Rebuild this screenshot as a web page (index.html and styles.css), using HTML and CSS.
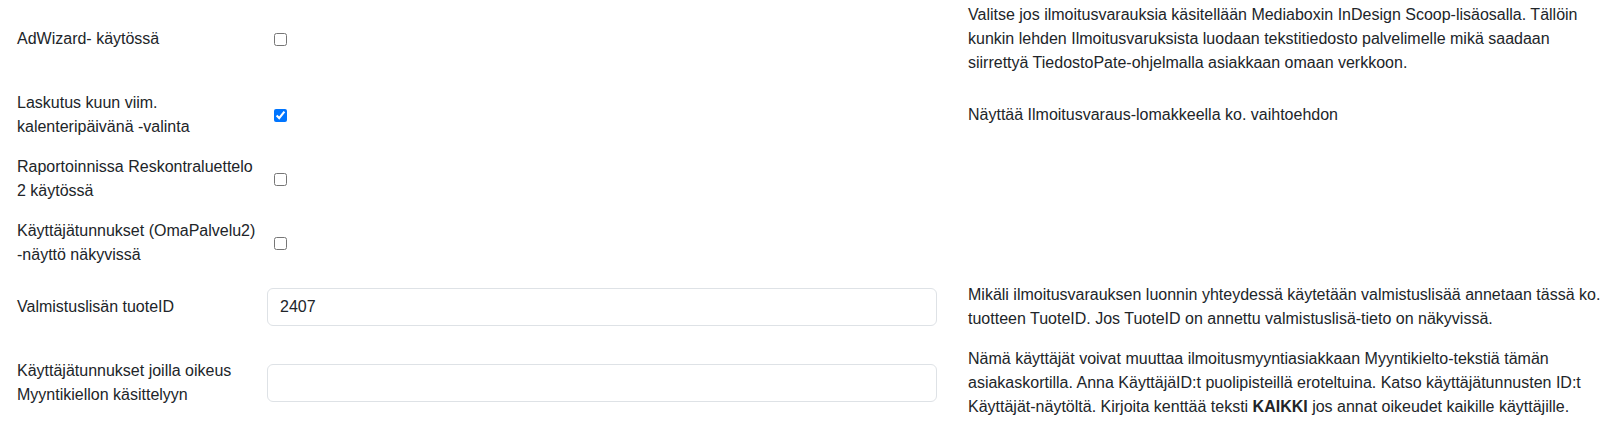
FILE: index.html
```html
<!DOCTYPE html>
<html lang="fi">
<head>
<meta charset="utf-8">
<title>Asetukset</title>
<link rel="stylesheet" href="styles.css">
</head>
<body>
<div class="settings">
  <div class="row">
    <label class="lbl" for="adw">AdWizard- käytössä</label>
    <div class="ctl"><input type="checkbox" id="adw" class="chk"></div>
    <div class="help">Valitse jos ilmoitusvarauksia käsitellään Mediaboxin InDesign Scoop-lisäosalla. Tällöin kunkin lehden Ilmoitusvaruksista luodaan tekstitiedosto palvelimelle mikä saadaan siirrettyä TiedostoPate-ohjelmalla asiakkaan omaan verkkoon.</div>
  </div>
  <div class="row">
    <label class="lbl" for="lask">Laskutus kuun viim. kalenteripäivänä -valinta</label>
    <div class="ctl"><input type="checkbox" id="lask" class="chk" checked></div>
    <div class="help">Näyttää Ilmoitusvaraus-lomakkeella ko. vaihtoehdon</div>
  </div>
  <div class="row">
    <label class="lbl" for="rap">Raportoinnissa Reskontraluettelo 2 käytössä</label>
    <div class="ctl"><input type="checkbox" id="rap" class="chk"></div>
    <div class="help"></div>
  </div>
  <div class="row">
    <label class="lbl" for="kt">Käyttäjätunnukset (OmaPalvelu2) -näyttö näkyvissä</label>
    <div class="ctl"><input type="checkbox" id="kt" class="chk"></div>
    <div class="help"></div>
  </div>
  <div class="row">
    <label class="lbl" for="vl">Valmistuslisän tuoteID</label>
    <div class="ctl"><input type="text" id="vl" class="field" value="2407"></div>
    <div class="help">Mikäli ilmoitusvarauksen luonnin yhteydessä käytetään valmistuslisää annetaan tässä ko. tuotteen TuoteID. Jos TuoteID on annettu valmistuslisä-tieto on näkyvissä.</div>
  </div>
  <div class="row">
    <label class="lbl" for="mk">Käyttäjätunnukset joilla oikeus Myyntikiellon käsittelyyn</label>
    <div class="ctl"><input type="text" id="mk" class="field" value=""></div>
    <div class="help">Nämä käyttäjät voivat muuttaa ilmoitusmyyntiasiakkaan Myyntikielto-tekstiä tämän asiakaskortilla. Anna KäyttäjäID:t puolipisteillä eroteltuina. Katso käyttäjätunnusten ID:t Käyttäjät-näytöltä. Kirjoita kenttää teksti <b>KAIKKI</b> jos annat oikeudet kaikille käyttäjille.</div>
  </div>
</div>
</body>
</html>
```
FILE: styles.css
```css
html, body {
  margin: 0;
  padding: 0;
  background: #fff;
}
body {
  font-family: "Liberation Sans", Arial, sans-serif;
  font-size: 16px;
  line-height: 24px;
  color: #212529;
}
.settings {
  padding: 3px 0 0 17px;
  display: flex;
  flex-direction: column;
  gap: 16px;
}
.row {
  display: grid;
  grid-template-columns: 245px 670px 1fr;
  column-gap: 5px;
  align-items: center;
}
.lbl {
  display: block;
}
.ctl {
  display: flex;
  align-items: center;
}
.chk {
  margin: 0 0 0 7px;
  width: 13px;
  height: 13px;
}
.field {
  box-sizing: border-box;
  width: 100%;
  height: 38px;
  padding: 6px 12px;
  font: inherit;
  color: #212529;
  background: #fff;
  border: 1px solid #dee2e6;
  border-radius: 6px;
  outline: none;
}
.help {
  padding-left: 26px;
}
.help b {
  font-weight: bold;
}
```
